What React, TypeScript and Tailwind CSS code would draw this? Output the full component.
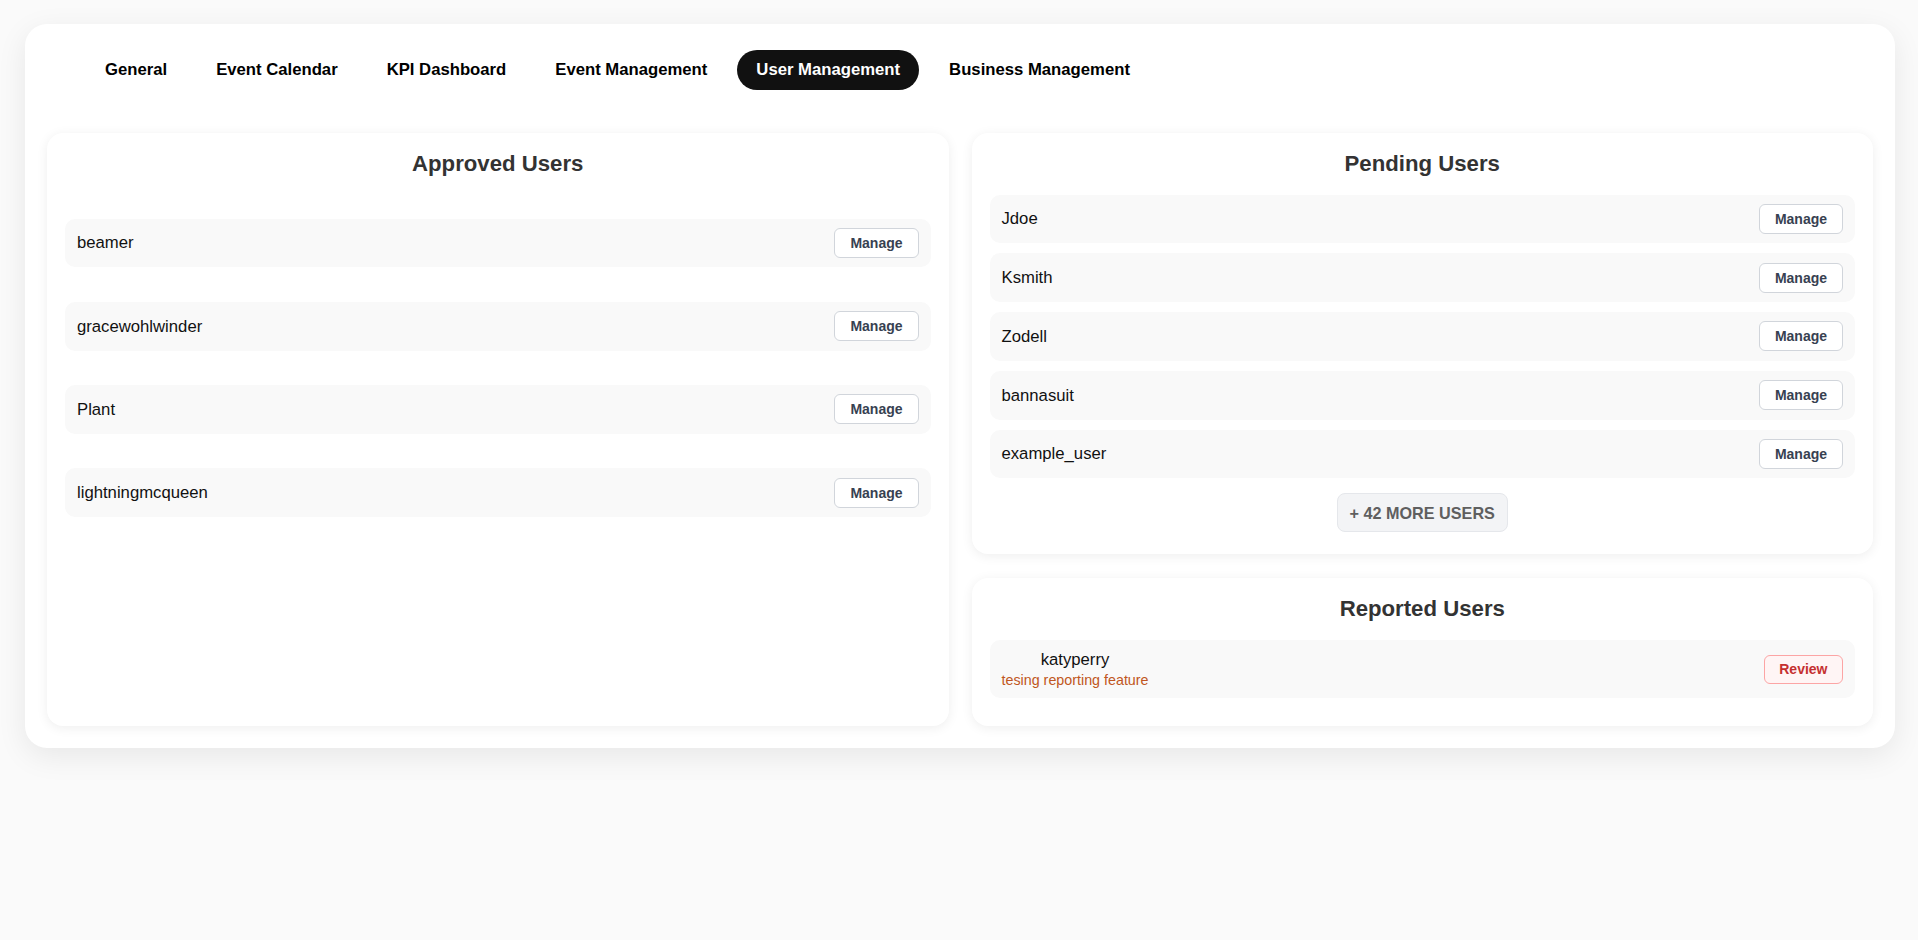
import React from "react";

const tabs = ["General", "Event Calendar", "KPI Dashboard", "Event Management", "User Management", "Business Management"];

const approvedUsers = ["beamer", "gracewohlwinder", "Plant", "lightningmcqueen"];
const pendingUsers = ["Jdoe", "Ksmith", "Zodell", "bannasuit", "example_user"];

const ManageButton: React.FC = () => (
  <button className="h-[30px] px-[15px] bg-white border border-[#d1d5db] rounded-[6px] text-[14px] font-bold text-[#374151] leading-none">
    Manage
  </button>
);

const UserRow: React.FC<{ name: string }> = ({ name }) => (
  <div className="h-[48.75px] flex items-center justify-between pl-[12px] pr-[12px] bg-[#f9f9f9] rounded-[10px]">
    <span className="text-[16.7px] text-[#111]">{name}</span>
    <ManageButton />
  </div>
);

const PanelTitle: React.FC<{ children: React.ReactNode }> = ({ children }) => (
  <h2 className="text-center text-[22.2px] leading-[25px] font-bold text-[#333]">{children}</h2>
);

const App: React.FC = () => {
  return (
    <div className="min-h-screen bg-[#fafafa] pt-[24px] pl-[25px] pr-[23px] font-['Liberation_Sans',Arial,sans-serif]">
      <div className="bg-white rounded-[22px] shadow-[0_8px_30px_rgba(0,0,0,0.08)] px-[22px] pt-[26px] pb-[22px]">
        {/* tabs */}
        <nav className="flex gap-[11px] pl-[39px]">
          {tabs.map((tab) => (
            <button
              key={tab}
              className={
                tab === "User Management"
                  ? "px-[19px] py-[10px] leading-[20px] rounded-full bg-[#111] text-white text-[16.7px] font-bold"
                  : "px-[19px] py-[10px] leading-[20px] rounded-full text-black text-[16.7px] font-bold"
              }
            >
              {tab}
            </button>
          ))}
        </nav>

        <div className="grid grid-cols-2 gap-[23px] mt-[42.5px]">
          {/* approved */}
          <section className="bg-white rounded-2xl shadow-[0_2px_12px_rgba(0,0,0,0.07)] p-[18px]">
            <PanelTitle>Approved Users</PanelTitle>
            <div className="flex flex-col gap-[34.5px] mt-[43px]">
              {approvedUsers.map((u) => (
                <UserRow key={u} name={u} />
              ))}
            </div>
          </section>

          <div className="flex flex-col gap-[24px]">
            {/* pending */}
            <section className="bg-white rounded-2xl shadow-[0_2px_12px_rgba(0,0,0,0.07)] px-[18px] pt-[18px] pb-[22px]">
              <PanelTitle>Pending Users</PanelTitle>
              <div className="flex flex-col gap-[10px] mt-[19px]">
                {pendingUsers.map((u) => (
                  <UserRow key={u} name={u} />
                ))}
              </div>
              <div className="flex justify-center mt-[15px]">
                <button className="h-[39px] px-[12px] bg-[#f3f4f6] border border-[#e5e7eb] rounded-[8px] text-[16.2px] font-bold text-[#5f5f5f]">
                  + 42 MORE USERS
                </button>
              </div>
            </section>

            {/* reported */}
            <section className="bg-white rounded-2xl shadow-[0_2px_12px_rgba(0,0,0,0.07)] px-[18px] pt-[18px] pb-[28px]">
              <PanelTitle>Reported Users</PanelTitle>
              <div className="mt-[19px] h-[57.7px] flex items-center justify-between px-[12px] bg-[#f9f9f9] rounded-[10px]">
                <div className="flex flex-col items-center">
                  <span className="text-[16.7px] leading-[19px] text-[#111]">katyperry</span>
                  <span className="mt-[3px] text-[14.3px] leading-[16.5px] text-[#c05621]">tesing reporting feature</span>
                </div>
                <button className="h-[29px] px-[14.5px] bg-[#fff5f5] border border-[#fca5a5] rounded-[6px] text-[14px] font-bold text-[#c53030] leading-none">
                  Review
                </button>
              </div>
            </section>
          </div>
        </div>
      </div>
    </div>
  );
};

export default App;
